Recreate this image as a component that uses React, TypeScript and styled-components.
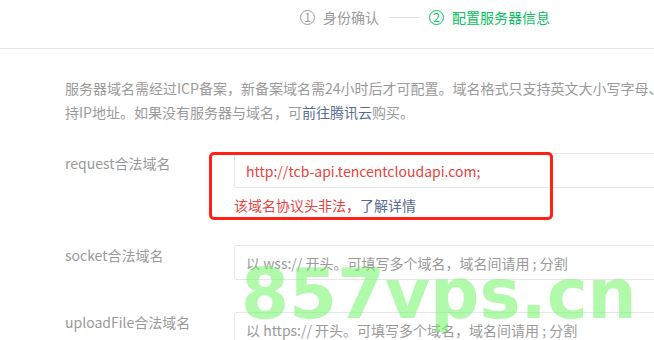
import React from "react"
import styled, {createGlobalStyle} from "styled-components";

const GlobalStyle = createGlobalStyle`
  html, body {
    margin: 0;
    padding: 0;
    background: #fff;
  }
  body {
    font-family: "Noto Sans CJK SC", "Liberation Sans", sans-serif;
    font-size: 14px;
    color: #353535;
  }
`

const Page = styled.div`
  position: relative;
  width: 654px;
  height: 340px;
  overflow: hidden;
  background: #fff;
`

const Header = styled.div`
  height: 34px;
  padding-bottom: 14px;
  border-bottom: 1px solid #e7e7eb;
  display: flex;
  align-items: center;
  padding-left: 300px;
`

const Step = styled.div<{ $active?: boolean }>`
  display: flex;
  align-items: center;
  gap: 8px;
  color: ${p => p.$active ? "#07c160" : "#9a9a9a"};
  font-size: 14px;
  line-height: 20px;
`

const StepNum = styled.span`
  width: 15px;
  height: 15px;
  border: 1px solid currentColor;
  border-radius: 50%;
  box-sizing: border-box;
  display: flex;
  align-items: center;
  justify-content: center;
  font-size: 12px;
  line-height: 1;
`

const StepLine = styled.span`
  width: 30px;
  height: 1px;
  background: #dcdfe6;
  margin: 0 10px;
`

const Content = styled.div`
  padding: 27px 0 0 65px;
`

const Desc = styled.p`
  margin: 0;
  white-space: nowrap;
  font-size: 14px;
  line-height: 24px;
  color: #9a9a9a;
`

const Link = styled.a`
  color: #576b95;
  text-decoration: none;
`

const Form = styled.div`
  margin-top: 29px;
  width: 900px;
`

const Row = styled.div`
  display: flex;
  align-items: flex-start;
  margin-bottom: 32px;
`

const Label = styled.div`
  width: 169px;
  flex: none;
  font-size: 14px;
  line-height: 20px;
  color: #9a9a9a;
`

const Field = styled.div`
  position: relative;
  flex: none;
`

const Input = styled.div<{ $error?: boolean }>`
  width: 480px;
  height: 35px;
  box-sizing: border-box;
  border: 1px solid #e7e7eb;
  border-radius: 2px;
  padding: 0 11px;
  display: flex;
  align-items: center;
  font-size: 14px;
  color: ${p => p.$error ? "#e64340" : "#9a9a9a"};
`

const ErrorTip = styled.div`
  margin: 7px 0 -2px;
  font-size: 14px;
  line-height: 20px;
  color: #e64340;
`

const Highlight = styled.div`
  position: absolute;
  left: -25px;
  top: -1px;
  width: 344px;
  height: 68px;
  border: 3px solid #ff2116;
  border-radius: 5px;
  box-sizing: border-box;
  pointer-events: none;
`

const Watermark = styled.div`
  position: absolute;
  left: 241px;
  top: 260px;
  font-family: "DejaVu Sans", sans-serif;
  font-weight: bold;
  font-size: 69px;
  line-height: 1;
  color: rgba(100, 245, 90, 0.5);
  pointer-events: none;
  white-space: nowrap;
`

const fields = [
    {label: "socket合法域名", placeholder: "以 wss:// 开头。可填写多个域名，域名间请用 ; 分割"},
    {label: "uploadFile合法域名", placeholder: "以 https:// 开头。可填写多个域名，域名间请用 ; 分割"},
]

export default function App() {
    return (
        <Page>
            <GlobalStyle/>
            <Header>
                <Step>
                    <StepNum>1</StepNum>
                    身份确认
                </Step>
                <StepLine/>
                <Step $active>
                    <StepNum>2</StepNum>
                    配置服务器信息
                </Step>
            </Header>
            <Content>
                <Desc>
                    服务器域名需经过ICP备案，新备案域名需24小时后才可配置。域名格式只支持英文大小写字母、<br/>
                    持IP地址。如果没有服务器与域名，可<Link>前往腾讯云</Link>购买。
                </Desc>
                <Form>
                    <Row>
                        <Label>request合法域名</Label>
                        <Field>
                            <Input $error>http://tcb-api.tencentcloudapi.com;</Input>
                            <ErrorTip>该域名协议头非法，<Link>了解详情</Link></ErrorTip>
                            <Highlight/>
                        </Field>
                    </Row>
                    {fields.map(f => (
                        <Row key={f.label}>
                            <Label>{f.label}</Label>
                            <Field>
                                <Input>{f.placeholder}</Input>
                            </Field>
                        </Row>
                    ))}
                </Form>
            </Content>
            <Watermark>857vps.cn</Watermark>
        </Page>
    )
}
